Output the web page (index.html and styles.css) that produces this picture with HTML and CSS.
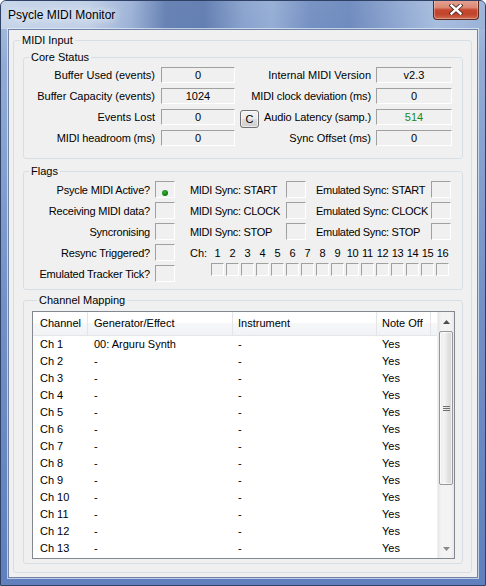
FILE: index.html
```html
<!DOCTYPE html>
<html>
<head>
<meta charset="utf-8">
<title>Psycle MIDI Monitor</title>
<link rel="stylesheet" href="styles.css">
</head>
<body>
<div class="window">
  <div class="titlebar">
    <span class="title">Psycle MIDI Monitor</span>
    <div class="close">
      <svg width="14" height="11" viewBox="0 0 14 11"><path d="M2.5 1.5 L11.5 9.5 M11.5 1.5 L2.5 9.5" stroke="#4a2a24" stroke-width="4.2" stroke-linecap="square"/><path d="M2.5 1.5 L11.5 9.5 M11.5 1.5 L2.5 9.5" stroke="#ffffff" stroke-width="2.4" stroke-linecap="square"/></svg>
    </div>
  </div>
  <div class="client">
    <fieldset class="group outer">
      <legend>MIDI Input</legend>

      <fieldset class="group inner core">
        <legend>Core Status</legend>
        <div class="core-grid">
          <span class="lbl">Buffer Used (events)</span>
          <span class="field">0</span>
          <span></span>
          <span class="lbl lbl2">Internal MIDI Version</span>
          <span class="field">v2.3</span>

          <span class="lbl">Buffer Capacity (events)</span>
          <span class="field">1024</span>
          <span></span>
          <span class="lbl lbl2 tight">MIDI clock deviation (ms)</span>
          <span class="field">0</span>

          <span class="lbl">Events Lost</span>
          <span class="field">0</span>
          <span class="cbtn">C</span>
          <span class="lbl lbl2 tight">Audio Latency (samp.)</span>
          <span class="field green">514</span>

          <span class="lbl tight">MIDI headroom (ms)</span>
          <span class="field">0</span>
          <span></span>
          <span class="lbl lbl2">Sync Offset (ms)</span>
          <span class="field">0</span>
        </div>
      </fieldset>

      <fieldset class="group inner flags">
        <legend>Flags</legend>
        <div class="flags-body">
          <div class="flag-left">
            <span class="lbl">Psycle MIDI Active?</span>
            <span class="box on"><span class="dot"></span></span>
            <span class="lbl">Receiving MIDI data?</span>
            <span class="box"></span>
            <span class="lbl">Syncronising</span>
            <span class="box"></span>
            <span class="lbl">Resync Triggered?</span>
            <span class="box"></span>
            <span class="lbl">Emulated Tracker Tick?</span>
            <span class="box"></span>
          </div>
          <div class="flag-right">
            <div class="sync-grid">
              <span>MIDI Sync: START</span><span class="box"></span>
              <span class="emu">Emulated Sync: START</span><span class="box"></span>
              <span>MIDI Sync: CLOCK</span><span class="box"></span>
              <span class="emu">Emulated Sync: CLOCK</span><span class="box"></span>
              <span>MIDI Sync: STOP</span><span class="box"></span>
              <span class="emu">Emulated Sync: STOP</span><span class="box"></span>
            </div>
            <div class="chan-nums">
              <span class="ch-lbl">Ch:</span>
              <div class="nums">
                <span>1</span><span>2</span><span>3</span><span>4</span><span>5</span><span>6</span><span>7</span><span>8</span>
                <span>9</span><span>10</span><span>11</span><span>12</span><span>13</span><span>14</span><span>15</span><span>16</span>
              </div>
            </div>
            <div class="chan-boxes">
              <span></span><span></span><span></span><span></span><span></span><span></span><span></span><span></span>
              <span></span><span></span><span></span><span></span><span></span><span></span><span></span><span></span>
            </div>
          </div>
        </div>
      </fieldset>

      <fieldset class="group inner mapping">
        <legend>Channel Mapping</legend>
        <div class="list">
          <div class="list-main">
            <div class="hdr">
              <span class="c1">Channel</span>
              <span class="c2">Generator/Effect</span>
              <span class="c3">Instrument</span>
              <span class="c4">Note Off</span>
            </div>
            <div class="rows">
              <div class="row"><span class="c1">Ch 1</span><span class="c2">00: Arguru Synth</span><span class="c3">-</span><span class="c4">Yes</span></div>
              <div class="row"><span class="c1">Ch 2</span><span class="c2">-</span><span class="c3">-</span><span class="c4">Yes</span></div>
              <div class="row"><span class="c1">Ch 3</span><span class="c2">-</span><span class="c3">-</span><span class="c4">Yes</span></div>
              <div class="row"><span class="c1">Ch 4</span><span class="c2">-</span><span class="c3">-</span><span class="c4">Yes</span></div>
              <div class="row"><span class="c1">Ch 5</span><span class="c2">-</span><span class="c3">-</span><span class="c4">Yes</span></div>
              <div class="row"><span class="c1">Ch 6</span><span class="c2">-</span><span class="c3">-</span><span class="c4">Yes</span></div>
              <div class="row"><span class="c1">Ch 7</span><span class="c2">-</span><span class="c3">-</span><span class="c4">Yes</span></div>
              <div class="row"><span class="c1">Ch 8</span><span class="c2">-</span><span class="c3">-</span><span class="c4">Yes</span></div>
              <div class="row"><span class="c1">Ch 9</span><span class="c2">-</span><span class="c3">-</span><span class="c4">Yes</span></div>
              <div class="row"><span class="c1">Ch 10</span><span class="c2">-</span><span class="c3">-</span><span class="c4">Yes</span></div>
              <div class="row"><span class="c1">Ch 11</span><span class="c2">-</span><span class="c3">-</span><span class="c4">Yes</span></div>
              <div class="row"><span class="c1">Ch 12</span><span class="c2">-</span><span class="c3">-</span><span class="c4">Yes</span></div>
              <div class="row"><span class="c1">Ch 13</span><span class="c2">-</span><span class="c3">-</span><span class="c4">Yes</span></div>
            </div>
          </div>
          <div class="vscroll">
            <div class="sb-btn">
              <svg width="7" height="4" viewBox="0 0 7 4"><path d="M0 4 L3.5 0 L7 4 Z" fill="#4d4d4d"/></svg>
            </div>
            <div class="thumb">
              <svg width="7" height="7" viewBox="0 0 7 7"><path d="M0 1.5 H7 M0 3.5 H7 M0 5.5 H7" stroke="#6f6f6f" stroke-width="1"/></svg>
            </div>
            <div class="track"></div>
            <div class="sb-btn">
              <svg width="7" height="4" viewBox="0 0 7 4"><path d="M0 0 L3.5 4 L7 0 Z" fill="#8a8a8a"/></svg>
            </div>
          </div>
        </div>
      </fieldset>
    </fieldset>
  </div>
</div>
</body>
</html>
```

FILE: styles.css
```css
* { box-sizing: border-box; }
html, body { margin: 0; padding: 0; }
body {
  width: 486px;
  height: 586px;
  overflow: hidden;
  background: #ffffff;
  font-family: "Liberation Sans", Arial, sans-serif;
  font-size: 11px;
  color: #000;
}

.window {
  width: 486px;
  height: 586px;
  display: flex;
  flex-direction: column;
  border: 1px solid #2f4266;
  border-radius: 6px 6px 0 0;
  overflow: hidden;
  background: linear-gradient(180deg, #aec2e0 0px, #93acd6 60px, #7391c7 300px, #5f80bd 586px);
}

.titlebar {
  height: 28px;
  display: flex;
  align-items: flex-start;
  padding-left: 7px;
  background: linear-gradient(90deg,
    rgba(200,214,234,0.95) 0%,
    rgba(196,210,232,0.9) 18%,
    rgba(150,172,210,0.6) 27%,
    rgba(88,116,170,0.8) 34%,
    rgba(84,112,168,0.8) 42%,
    rgba(120,148,196,0.6) 50%,
    rgba(140,166,208,0.6) 56%,
    rgba(98,128,184,0.7) 64%,
    rgba(90,120,178,0.7) 72%,
    rgba(130,156,202,0.6) 82%,
    rgba(170,192,224,0.7) 90%,
    rgba(150,174,214,0.6) 100%);
}

.title {
  margin-top: 6px;
  font-size: 12px;
  line-height: 16px;
  color: #000;
  text-shadow: 0 0 6px #e4ecf6, 0 0 10px #e4ecf6, 0 0 14px #dfe8f4;
}

.close {
  margin-left: auto;
  margin-right: 6px;
  margin-top: -1px;
  width: 46px;
  height: 20px;
  border: 1px solid #5b2a22;
  border-top: none;
  border-radius: 0 0 4px 4px;
  background: linear-gradient(180deg, #e6a596 0%, #db8774 40%, #c8472f 52%, #c0442b 75%, #cf6e52 100%);
  box-shadow: inset 0 0 0 1px rgba(255,255,255,0.3);
  display: flex;
  align-items: center;
  justify-content: center;
}

.client {
  flex: 1;
  margin: 0 7px 7px 7px;
  border: 1px solid #6f84a8;
  background: #f0f0f0;
  padding: 4px 5px 0 4px;
  box-shadow: 0 0 0 1px rgba(230,238,248,0.7);
}

fieldset.group {
  margin: 0;
  border: 1px solid #d5dfe5;
  border-radius: 3px;
  min-width: 0;
}

fieldset.group > legend {
  padding: 0 2px;
  height: 13px;
  line-height: 13px;
  font-size: 11px;
}

fieldset.outer {
  padding: 4px 8px 8px 9px;
}
fieldset.outer > legend { margin-left: -3px; }

fieldset.inner { padding: 0; }
fieldset.inner > legend { margin-left: 5px; }

/* Core status */
fieldset.core { padding: 3px 0 12px 0; }
.core-grid {
  display: grid;
  grid-template-columns: 137px 74px 24px 117px 76px;
  grid-auto-rows: 16px;
  row-gap: 5px;
  align-items: center;
}
.lbl {
  justify-self: end;
  text-align: right;
  padding-right: 6px;
  white-space: nowrap;
}
.lbl2 { padding-right: 5px; }
.tight { letter-spacing: -0.15px; }

.field {
  height: 16px;
  border: 1px solid;
  border-color: #a0a0a0 #ffffff #ffffff #a0a0a0;
  text-align: center;
  line-height: 14px;
}
.green { color: #1a8a1a; }

.cbtn {
  justify-self: end;
  align-self: start;
  margin-top: 1px;
  width: 19px;
  height: 18px;
  border: 1px solid #707070;
  border-radius: 3px;
  background: linear-gradient(180deg, #f2f2f2 0%, #ebebeb 50%, #dddddd 50%, #cfcfcf 100%);
  box-shadow: inset 0 0 0 1px rgba(255,255,255,0.6);
  text-align: center;
  line-height: 16px;
}

/* Flags */
fieldset.flags { margin-top: 6px; padding: 3px 0 7px 0; }
.flags-body { display: flex; }
.flag-left {
  display: grid;
  grid-template-columns: 131px 20px;
  grid-auto-rows: 17px;
  row-gap: 4px;
  align-items: center;
}
.flag-left .lbl { padding-right: 5px; letter-spacing: -0.2px; }

.box {
  width: 20px;
  height: 17px;
  border: 1px solid;
  border-color: #a0a0a0 #ffffff #ffffff #a0a0a0;
}
.box.on {
  display: flex;
  padding: 8px 0 0 6px;
}
.dot {
  width: 6px;
  height: 6px;
  border-radius: 50%;
  background: radial-gradient(circle at 40% 35%, #3fae3f 0%, #138a13 50%, #0b6a0b 100%);
}

.flag-right {
  margin-left: 15px;
  display: flex;
  flex-direction: column;
}
.sync-grid {
  display: grid;
  grid-template-columns: 96px 20px 125px 20px;
  grid-auto-rows: 17px;
  row-gap: 4px;
  align-items: center;
  white-space: nowrap;
  letter-spacing: -0.3px;
}
.emu { padding-left: 10px; }

.chan-nums {
  margin-top: 4px;
  display: flex;
  height: 19px;
  line-height: 19px;
}
.ch-lbl { width: 21px; }
.nums, .chan-boxes {
  display: grid;
  grid-template-columns: repeat(16, 13px);
  column-gap: 2px;
}
.nums span { white-space: nowrap; display: flex; justify-content: center; letter-spacing: -0.3px; }
.chan-boxes { margin-left: 21px; }
.chan-boxes span {
  height: 13px;
  border: 1px solid;
  border-color: #a0a0a0 #ffffff #ffffff #a0a0a0;
}

/* Channel mapping */
fieldset.mapping { margin-top: 4px; padding: 4px 7px 4px 8px; }
.list {
  height: 248px;
  border: 1px solid #828790;
  background: #fff;
  display: flex;
}
.list-main {
  flex: 1;
  overflow: hidden;
  min-width: 0;
}
.hdr {
  height: 24px;
  display: flex;
  border-bottom: 1px solid #e3e5e8;
  background: linear-gradient(180deg, #ffffff 0%, #ffffff 45%, #f6f7f8 50%, #f2f3f5 100%);
  line-height: 23px;
}
.hdr span {
  border-right: 1px solid #e3e5e8;
  white-space: nowrap;
}
.row {
  display: flex;
  height: 17px;
  line-height: 17px;
}
.row span { white-space: nowrap; }
.c1 { width: 55px; padding-left: 7px; }
.c2 { width: 145px; padding-left: 6px; }
.c3 { width: 144px; padding-left: 5px; }
.c4 { width: 54px; padding-left: 5px; }

.vscroll {
  width: 17px;
  display: flex;
  flex-direction: column;
  background: linear-gradient(90deg, #e6e6e6 0%, #f3f3f3 20%, #f3f3f3 80%, #e8e8e8 100%);
  border-left: 1px solid #f0f0f0;
}
.sb-btn {
  height: 19px;
  display: flex;
  align-items: center;
  justify-content: center;
}
.thumb {
  height: 154px;
  margin: 0 1px;
  border: 1px solid #979797;
  border-radius: 2px;
  background: linear-gradient(90deg, #ececec 0%, #f4f4f4 35%, #e3e3e3 65%, #d6d6d6 100%);
  box-shadow: inset 0 0 0 1px rgba(255,255,255,0.7);
  display: flex;
  align-items: center;
  justify-content: center;
}
.track { flex: 1; }
```
